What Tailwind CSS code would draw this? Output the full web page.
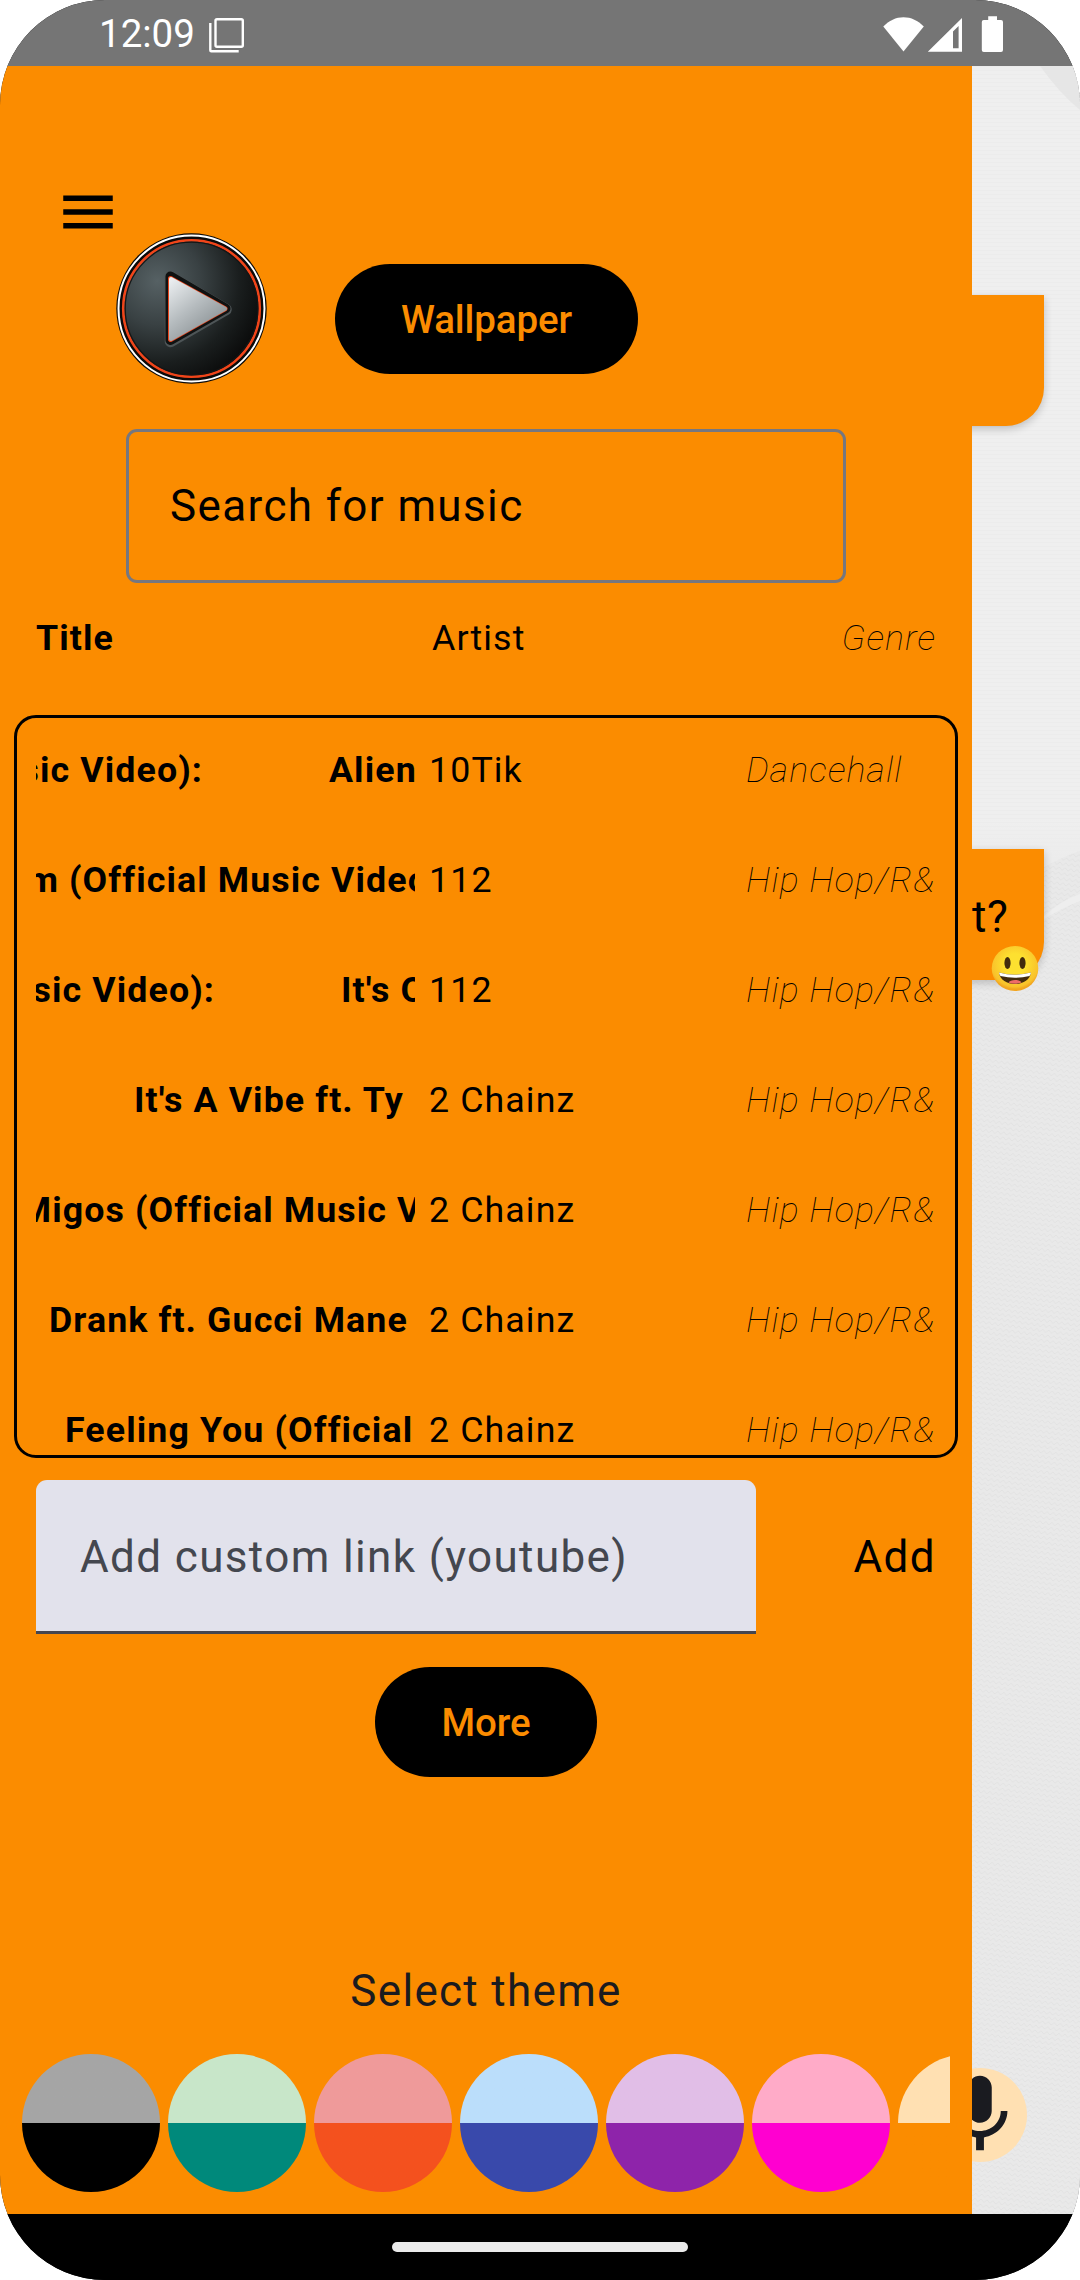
<!DOCTYPE html>
<html lang="en">
<head>
<meta charset="utf-8">
<title>Music drawer</title>
<script src="https://cdn.jsdelivr.net/npm/@tailwindcss/browser@4"></script>
</head>
<body class="bg-white font-['Roboto',sans-serif] text-black">
<div class="flex h-[2280px] w-[1080px] flex-col overflow-hidden rounded-[105px] bg-black">

  <!-- Status bar -->
  <header class="flex h-[66px] shrink-0 items-center bg-[#757575] pl-[99px] text-white">
    <span class="w-[110px] pt-[2px] text-[38.5px] leading-[66px]">12:09</span>
    <svg class="h-[40px] w-[36px]" viewBox="0 -2 36 40" fill="none" stroke="#fff" stroke-width="2.4"><rect x="6.500" y="4.200" width="27.300" height="27.600" rx="1.500"/><path d="M1.300 8V35.200a1 1 0 0 0 1 1H29.700"/></svg>
    <svg class="ml-auto h-[66px] w-[197px]" viewBox="883 0 197 66" fill="#fff">
      <path d="M903.500 51.600 883.300 26.600C889 20.500 896 17.200 903.500 17.200s14.600 3.300 20.300 9.400z"/>
      <path fill-rule="evenodd" d="M962 18v33.800H927.800zM958.600 26 953 31.500V48.200h5.600z"/>
      <path d="M988.200 16.300h8.800v3.700h4a2 2 0 0 1 2 2v28a2 2 0 0 1-2 2h-17.200a2 2 0 0 1-2-2V22a2 2 0 0 1 2-2h4.400z"/>
    </svg>
  </header>

  <div class="flex h-[2148px] shrink-0">
    <!-- Drawer -->
    <aside class="flex w-[972px] shrink-0 flex-col bg-[#fb8c00]">
      <div class="flex h-[363px] shrink-0">
        <svg class="mt-[113px] ml-[55px] h-[66px] w-[66px] shrink-0" viewBox="0 0 24 24"><path d="M3 18h18v-2H3v2zm0-5h18v-2H3v2zm0-7v2h18V6H3z"/></svg>
        <svg class="mt-[167px] -ml-[5px] h-[151px] w-[151px] shrink-0" viewBox="0 0 151 151">
          <defs>
            <radialGradient id="disc" cx=".25" cy=".3" r=".8"><stop offset="0" stop-color="#566164"/><stop offset=".4" stop-color="#394143"/><stop offset=".75" stop-color="#1a1e1e"/><stop offset="1" stop-color="#0b0c0c"/></radialGradient>
            <linearGradient id="tri" x1="0" y1="0" x2=".7" y2="1"><stop offset="0" stop-color="#eceff1"/><stop offset=".5" stop-color="#b6bcbf"/><stop offset="1" stop-color="#858c8f"/></linearGradient>
          </defs>
          <circle cx="75.500" cy="75.500" r="75.200" fill="#0a0a0a"/>
          <circle cx="75.500" cy="75.500" r="73" fill="none" stroke="#fff" stroke-width="2"/>
          <circle cx="75.500" cy="75.500" r="68.300" fill="url(#disc)" stroke="#f0451a" stroke-width="2.600"/>
          <circle cx="75.500" cy="75.500" r="66.300" fill="none" stroke="#141616" stroke-width="1.200"/>
          <path d="M54.500 44 110 76.500 54.500 108.500z" fill="none" stroke="#4e5557" stroke-width="11.500" stroke-linejoin="round"/>
          <path d="M54.500 43.500 109.500 75.500 54.500 107z" fill="#111" stroke="#101212" stroke-width="10" stroke-linejoin="round"/>
          <path d="M54.500 45.500 109 75.800 54.500 106.500z" fill="#e8461d" stroke="#e8461d" stroke-width="5" stroke-linejoin="round"/>
          <path d="M55 46 109 75.800 55 106z" fill="url(#tri)" stroke="url(#tri)" stroke-width="4" stroke-linejoin="round"/>
        </svg>
        <button class="mt-[198px] ml-[68px] h-[110px] w-[303px] shrink-0 rounded-full bg-black pt-[2px] text-[38.5px] font-medium tracking-[-0.1px] text-[#fb8c00]">Wallpaper</button>
      </div>

      <div class="ml-[126px] flex h-[154px] w-[720px] shrink-0 items-center rounded-[11px] border-3 border-[#757780] pl-[41px] text-[44px] tracking-[1.375px]">Search for music</div>

      <div class="mt-[34px] flex h-[44px] shrink-0 items-center pl-[36px] text-[35.75px] tracking-[1.1px]">
        <span class="w-[396px] font-bold">Title</span>
        <span>Artist</span>
        <span class="mr-[36px] ml-auto font-thin italic">Genre</span>
      </div>

      <!-- Track list: titles scroll as marquees, so each one is clipped at its column -->
      <div class="mt-[54px] ml-[14px] h-[743px] w-[944px] shrink-0 overflow-hidden rounded-[22px] border-3 border-black pl-[19px] text-[35.75px] tracking-[1.1px] whitespace-nowrap">
        <div class="-mt-[2px] grid h-[110px] grid-cols-[379px_331px_188px] items-center">
          <div class="flex overflow-hidden font-bold"><span class="flex w-[167px] shrink-0 justify-end">(Official Music Video):</span><span class="ml-[126px]">Alien</span></div>
          <span class="pl-[14px]">10Tik</span><span class="font-thin italic">Dancehall</span>
        </div>
        <div class="grid h-[110px] grid-cols-[379px_331px_188px] items-center">
          <div class="flex overflow-hidden font-bold"><span class="flex w-[23px] shrink-0 justify-end">Cream</span><span class="ml-[10px]">(Official Music Video):</span></div>
          <span class="pl-[14px]">112</span><span class="font-thin italic">Hip Hop/R&amp;</span>
        </div>
        <div class="grid h-[110px] grid-cols-[379px_331px_188px] items-center">
          <div class="flex overflow-hidden font-bold"><span class="flex w-[179px] shrink-0 justify-end">(Official Music Video):</span><span class="ml-[126px]">It's Over Now</span></div>
          <span class="pl-[14px]">112</span><span class="font-thin italic">Hip Hop/R&amp;</span>
        </div>
        <div class="grid h-[110px] grid-cols-[379px_331px_188px] items-center">
          <div class="overflow-hidden pl-[98px] font-bold">It's A Vibe ft. Ty</div>
          <span class="pl-[14px]">2 Chainz</span><span class="font-thin italic">Hip Hop/R&amp;</span>
        </div>
        <div class="grid h-[110px] grid-cols-[379px_331px_188px] items-center">
          <div class="flex overflow-hidden font-bold"><span class="flex w-[89px] shrink-0 justify-end">Migos</span><span class="ml-[10px]">(Official Music Video):</span></div>
          <span class="pl-[14px]">2 Chainz</span><span class="font-thin italic">Hip Hop/R&amp;</span>
        </div>
        <div class="grid h-[110px] grid-cols-[379px_331px_188px] items-center">
          <div class="overflow-hidden pl-[13px] font-bold">Drank ft. Gucci Mane</div>
          <span class="pl-[14px]">2 Chainz</span><span class="font-thin italic">Hip Hop/R&amp;</span>
        </div>
        <div class="grid h-[110px] grid-cols-[379px_331px_188px] items-center">
          <div class="overflow-hidden pl-[29px] font-bold">Feeling You (Official</div>
          <span class="pl-[14px]">2 Chainz</span><span class="font-thin italic">Hip Hop/R&amp;</span>
        </div>
      </div>

      <div class="mt-[22px] flex h-[154px] shrink-0 items-center pr-[36px] pl-[36px] text-[44px] tracking-[1.375px]">
        <div class="flex h-[154px] w-[720px] items-center rounded-t-[11px] border-b-3 border-[#454650] bg-[#e2e2ec] pt-[3px] pl-[44px] text-[#44474f]">Add custom link (youtube)</div>
        <span class="ml-auto">Add</span>
      </div>

      <button class="mt-[33px] h-[110px] w-[222px] shrink-0 self-center rounded-full bg-black pt-[2px] text-[38.5px] font-medium tracking-[-0.1px] text-[#fb8c00]">More</button>

      <div class="mt-[181px] h-[66px] shrink-0 text-center text-[44px] leading-[66px] tracking-[1.3px] text-[#1b1b1f]">Select theme</div>

      <div class="mt-[30px] ml-[22px] flex w-[928px] shrink-0 gap-[8px] overflow-hidden">
        <div class="h-[138px] w-[138px] shrink-0 rounded-full bg-linear-to-b from-[#a5a5a5] from-50% to-black to-50%"></div>
        <div class="h-[138px] w-[138px] shrink-0 rounded-full bg-linear-to-b from-[#c8e6c9] from-50% to-[#00897b] to-50%"></div>
        <div class="h-[138px] w-[138px] shrink-0 rounded-full bg-linear-to-b from-[#ef9a9a] from-50% to-[#f4511e] to-50%"></div>
        <div class="h-[138px] w-[138px] shrink-0 rounded-full bg-linear-to-b from-[#bbdefb] from-50% to-[#3949ab] to-50%"></div>
        <div class="h-[138px] w-[138px] shrink-0 rounded-full bg-linear-to-b from-[#e1bee7] from-50% to-[#8e24aa] to-50%"></div>
        <div class="h-[138px] w-[138px] shrink-0 rounded-full bg-linear-to-b from-[#ffabc8] from-50% to-[#ff00d0] to-50%"></div>
        <div class="h-[138px] w-[138px] shrink-0 rounded-full bg-linear-to-b from-[#ffe0b2] from-50% to-[#fb8c00] to-50%"></div>
      </div>
    </aside>

    <!-- Visible strip of the chat behind the drawer -->
    <main class="relative flex w-[108px] flex-col overflow-hidden">
      <svg class="absolute inset-0 h-[2148px] w-[108px]" viewBox="0 0 108 2148">
        <defs>
          <linearGradient id="wall" x1="0" y1="0" x2="0" y2="1"><stop offset="0" stop-color="#efefef"/><stop offset=".35" stop-color="#efefef"/><stop offset=".39" stop-color="#e9e9e9"/><stop offset="1" stop-color="#e8e8e8"/></linearGradient>
          <pattern id="grain" width="6" height="5" patternUnits="userSpaceOnUse" patternTransform="rotate(8)"><path d="M0 1 3 4 6 1" fill="none" stroke="#dfdfdf" stroke-width="1"/></pattern>
          <pattern id="lines" width="4" height="4" patternUnits="userSpaceOnUse"><path d="M0 .5H4" stroke="#ececec"/></pattern>
        </defs>
        <rect width="108" height="2148" fill="url(#wall)"/>
        <rect width="108" height="800" fill="url(#lines)"/>
        <path d="M68 0H108V44Q88 28 68 0z" fill="#e6e6e6"/>
        <path d="M0 860Q60 800 108 785V2148H0z" fill="#e9e9e9"/>
        <path d="M0 860Q60 800 108 785V2148H0z" fill="url(#grain)" opacity=".7"/>
        <path d="M72 850Q90 834 108 828V835Q90 842 72 853z" fill="#eeeeee"/>
      </svg>
      <div class="relative mt-[229px] -ml-[60px] h-[131px] w-[132px] shrink-0 rounded-br-[38px] bg-[#fb8c00] shadow-[0_3px_9px_rgba(0,0,0,0.2)]"></div>
      <div class="relative mt-[423px] -ml-[60px] h-[131px] w-[132px] shrink-0 rounded-br-[38px] bg-[#fb8c00] pt-[42px] pl-[60px] text-[44px] leading-[52px] tracking-[0.5px] shadow-[0_3px_9px_rgba(0,0,0,0.2)]">t?
        <svg class="absolute top-[96px] left-[79px] h-[47px] w-[48px]" viewBox="0 0 48 47">
          <defs><radialGradient id="face" cx=".5" cy=".4" r=".56"><stop offset=".4" stop-color="#fde030"/><stop offset=".9" stop-color="#f9c22b"/><stop offset="1" stop-color="#f2a51f"/></radialGradient></defs>
          <ellipse cx="24" cy="23.500" rx="23.300" ry="22.500" fill="url(#face)"/>
          <ellipse cx="16.500" cy="18" rx="3.100" ry="6" fill="#422b0d"/><ellipse cx="31.500" cy="18" rx="3.100" ry="6" fill="#422b0d"/>
          <path d="M8 27.500Q24 32 40 27.500C39 35 32 39 24 39S9 35 8 27.500z" fill="#422b0d"/>
          <path d="M8 27.500Q24 32 40 27.500Q40 29 38.500 31Q24 34.500 9.500 31Q8 29 8 27.500z" fill="#fff"/>
          <path d="M17.500 37.500C19 34 29 34 30.500 37.500Q24 40 17.500 37.500z" fill="#ef6b67"/>
        </svg>
      </div>
      <div class="relative mt-auto mb-[52px] -ml-[39px] h-[94px] w-[94px] shrink-0 rounded-full bg-[#ffe0b2]">
        <svg class="h-[94px] w-[94px]" viewBox="0 0 24 24" fill="#1a1b20"><path d="M12 14c1.660 0 2.990-1.340 2.990-3L15 5c0-1.660-1.340-3-3-3S9 3.340 9 5v6c0 1.660 1.340 3 3 3zm5.300-3c0 3-2.540 5.100-5.300 5.100S6.700 14 6.700 11H5c0 3.410 2.720 6.230 6 6.720V21h2v-3.280c3.280-.48 6-3.300 6-6.720h-1.700z"/></svg>
      </div>
    </main>
  </div>

  <!-- Gesture bar -->
  <nav class="flex h-[66px] shrink-0 items-center justify-center bg-black"><div class="h-[10px] w-[296px] rounded-full bg-[#ebebeb]"></div></nav>
</div>
</body>
</html>
